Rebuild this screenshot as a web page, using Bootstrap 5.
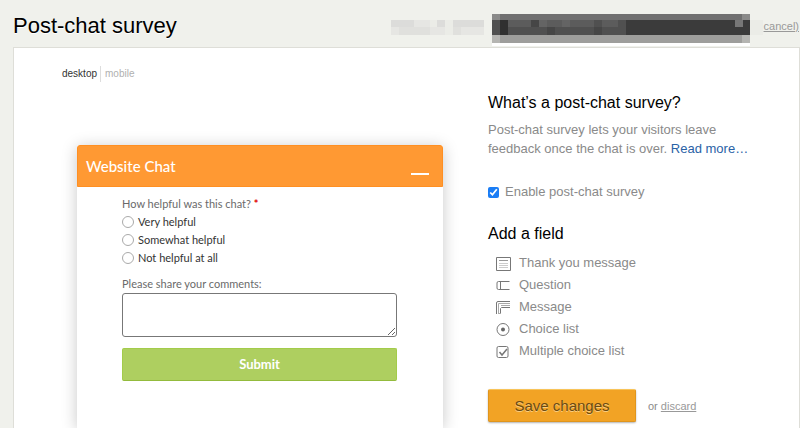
<!DOCTYPE html>
<html lang="en">
<head>
<meta charset="utf-8">
<meta name="viewport" content="width=device-width, initial-scale=1">
<title>Post-chat survey</title>
<link href="https://cdn.jsdelivr.net/npm/bootstrap@5.3.0/dist/css/bootstrap.min.css" rel="stylesheet">
<style>
body { background: #f0f1ec; font-family: "Liberation Sans", Arial, sans-serif; font-size: 13px; line-height: 20px; color: #8a8a8a; }
.page-head { height: 47px; padding: 4px 1px 0 13px; }
.page-title { font-size: 22px; line-height: 44px; color: #000; text-shadow: 0 1px 0 #fff; }
.small-text { font-size: 11px; line-height: 16px; }
.muted-link { color: #999; }
.panel { background: #fff; border: 1px solid #deded8; border-bottom: 0; margin-left: 13px; }
.preview { padding: 18px 45px 0 63px; }
.view-tabs { margin-left: -15px; margin-bottom: 63px; line-height: 16px; font-size: 10px; }
.view-tabs a { color: #b0b0b0; text-decoration: none; }
.view-tabs a.current { color: #333; padding-right: 3px; border-right: 1px solid #ddd; margin-right: 4px; }
.chat { font-family: Lato, sans-serif; background: #fff; border-radius: 3px 3px 0 0; box-shadow: 0 2px 16px rgba(0,0,0,.22); color: #6a6a6a; font-size: 11px; line-height: 18px; }
.chat-head { background: #ff9933; height: 42px; padding: 0 13px 0 8px; border-radius: 3px 3px 0 0; border: 1px solid #ff8f22; }
.chat-head h2 { font-size: 15px; line-height: 20px; font-weight: 500; color: #fff; }
.minimize { width: 18px; height: 18px; border-bottom: 2px solid #fff; }
.chat-body { padding: 8px 46px 24px 45px; }
.required { color: #e00000; }
.choice { color: #333; gap: 4px; height: 18px; }
.choice input { appearance: none; width: 12px; height: 12px; border: 1px solid #aaa; border-radius: 50%; margin: 0; background: #fff; }
.choice input:checked { background: #666; }
.comments { height: 44px; border: 1px solid #777; border-radius: 3px; resize: vertical; }
.submit { height: 33px; margin-top: 11px; padding: 0 0 2px; border: 1px solid #a3cc4a; border-bottom-color: #93bb3d; border-radius: 2px; background: #aecf60; color: #fff; font-size: 13px; line-height: 18px; font-weight: 700; }
.sidebar { width: 311px; padding: 45px 48px 0 0; }
.sidebar h2 { font-size: 16px; line-height: 20px; color: #000; }
.sidebar .intro { line-height: 19px; margin: 7px 0 24px; }
.intro a { color: #2a62a6; text-decoration: none; }
.enable { gap: 6px; margin-bottom: 22px; }
.enable input { width: 11px; height: 11px; margin: 0; accent-color: #1a7df5; }
.fields { padding-left: 8px; margin: 8px 0 27px; }
.fields a { color: #8a8a8a; text-decoration: none; gap: 8px; height: 22px; }
.fields svg { width: 15px; height: 15px; fill: none; stroke: #777; flex: none; }
.save { width: 148px; height: 33px; border: 1px solid #e0951c; border-top-color: #f8c45a; border-radius: 2px; background: #f2a325; color: #6b4a12; font-size: 15px; text-shadow: 0 1px 0 #f9cd80; box-shadow: 0 1px 2px rgba(0,0,0,.3); }
</style>
<script defer src="https://cdn.jsdelivr.net/npm/bootstrap@5.3.0/dist/js/bootstrap.bundle.min.js"></script>
</head>
<body class="d-flex flex-column min-vh-100">
<header class="page-head d-flex align-items-center">
  <h1 class="page-title fw-normal m-0 me-auto">Post-chat survey</h1>
  <svg class="align-self-end" width="376" height="34" viewBox="388 13 376 34" shape-rendering="crispEdges" aria-hidden="true">
    <path fill="#e6e6e3" d="M391 20h93v15h-93z"/>
    <path fill="#dcdcda" d="M391 20h23v7h-23zM437 20h8v7h-8zM453 20h31v7h-31z"/>
    <path fill="#e0e0dd" d="M399 27h31v8h-31zM453 27h8v8h-8z"/>
    <path fill="#ebece7" d="M430 20h7v7h-7zM445 20h8v15h-8zM750 20h13v15h-13z"/>
    <path fill="#fff" d="M492 43h258v3h-258z"/>
    <path fill="#707070" d="M492 14h258v6h-258z"/>
    <path fill="#3b3b3b" d="M492 20h258v15h-258z"/>
    <path fill="#9e9e9c" d="M492 35h258v8h-258z"/>
    <path fill="#8a8a89" d="M492 14h8v6h-8zM742 14h8v6h-8z"/>
    <path fill="#5c5c5c" d="M508 20h23v7h-23zM539 20h55v7h-55zM602 20h16v7h-16z"/>
    <path fill="#505050" d="M492 20h8v15h-8zM508 27h39v8h-39zM555 27h39v8h-39zM602 27h16v8h-16zM618 20h8v15h-8zM594 20h8v7h-8z"/>
    <path fill="#464646" d="M531 20h8v7h-8zM547 27h8v8h-8zM594 27h8v8h-8z"/>
    <path fill="#646464" d="M539 20h8v7h-8zM562 20h8v7h-8z"/>
    <path fill="#777" d="M735 20h8v7h-8z"/>
    <path fill="#303030" d="M500 20h8v15h-8z"/>
    <path fill="#b5b5b2" d="M492 35h8v8h-8zM742 35h8v8h-8z"/>
  </svg>
  <a href="#" class="small-text muted-link">cancel)</a>
</header>
<main class="panel d-flex flex-grow-1">
  <section class="preview d-flex flex-column flex-grow-1">
    <nav class="view-tabs d-flex"><a href="#" class="current">desktop</a><a href="#">mobile</a></nav>
    <form class="chat flex-grow-1">
      <div class="chat-head d-flex align-items-center justify-content-between">
        <h2 class="m-0">Website Chat</h2>
        <button type="button" class="minimize bg-transparent border-top-0 border-start-0 border-end-0 p-0" aria-label="Minimize"></button>
      </div>
      <div class="chat-body">
        <div id="rate">How helpful was this chat? <span class="required fw-bold">*</span></div>
        <div role="radiogroup" aria-labelledby="rate">
          <label class="choice d-flex align-items-center"><input type="radio" name="r">Very helpful</label>
          <label class="choice d-flex align-items-center"><input type="radio" name="r">Somewhat helpful</label>
          <label class="choice d-flex align-items-center"><input type="radio" name="r">Not helpful at all</label>
        </div>
        <label for="comments" class="d-block mt-2">Please share your comments:</label>
        <textarea id="comments" class="comments d-block w-100"></textarea>
        <button type="button" class="submit d-block w-100">Submit</button>
      </div>
    </form>
  </section>
  <aside class="sidebar flex-shrink-0">
    <h2 class="fw-normal m-0">What’s a post-chat survey?</h2>
    <p class="intro">Post-chat survey lets your visitors leave feedback once the chat is over. <a href="#">Read more…</a></p>
    <label class="enable d-flex align-items-center"><input type="checkbox" checked>Enable post-chat survey</label>
    <h2 class="fw-normal m-0">Add a field</h2>
    <ul class="fields list-unstyled">
      <li><a href="#" class="d-flex align-items-center"><svg viewBox="0 0 15 15"><path d="M.5 1.500h14v13H.5z"/><path stroke="#999" d="M3 4.500h9"/><path stroke="#ccc" d="M3 7.500h9M3 9.500h9M3 11.500h9"/></svg>Thank you message</a></li>
      <li><a href="#" class="d-flex align-items-center"><svg viewBox="0 0 15 15"><path d="M13.500 3.500H2.500q-1.500 0-1.500 1.500v5q0 1.500 1.500 1.500h11M4.500 3.500v8"/></svg>Question</a></li>
      <li><a href="#" class="d-flex align-items-center"><svg viewBox="0 0 15 15"><path d="M.5 14V3q0-1.500 1.500-1.500h12M4.500 14V8.500l1-1H14"/><path stroke="#aaa" d="M2.500 14V3.500H14M5 5.500h9M2 13.500h3"/></svg>Message</a></li>
      <li><a href="#" class="d-flex align-items-center"><svg viewBox="0 0 15 15"><circle cx="7" cy="7.500" r="6"/><circle cx="7" cy="7.500" r="2" fill="#666" stroke="none"/></svg>Choice list</a></li>
      <li><a href="#" class="d-flex align-items-center"><svg viewBox="0 0 15 15"><rect x="1" y="2.500" width="11" height="11" rx="1.500"/><path stroke-width="1.500" d="M3.500 8l2.500 3L11 5"/></svg>Multiple choice list</a></li>
    </ul>
    <div class="d-flex align-items-center">
      <button type="button" class="save p-0">Save changes</button>
      <span class="small-text ms-2 ps-1">or <a href="#" class="muted-link">discard</a></span>
    </div>
  </aside>
</main>
</body>
</html>
